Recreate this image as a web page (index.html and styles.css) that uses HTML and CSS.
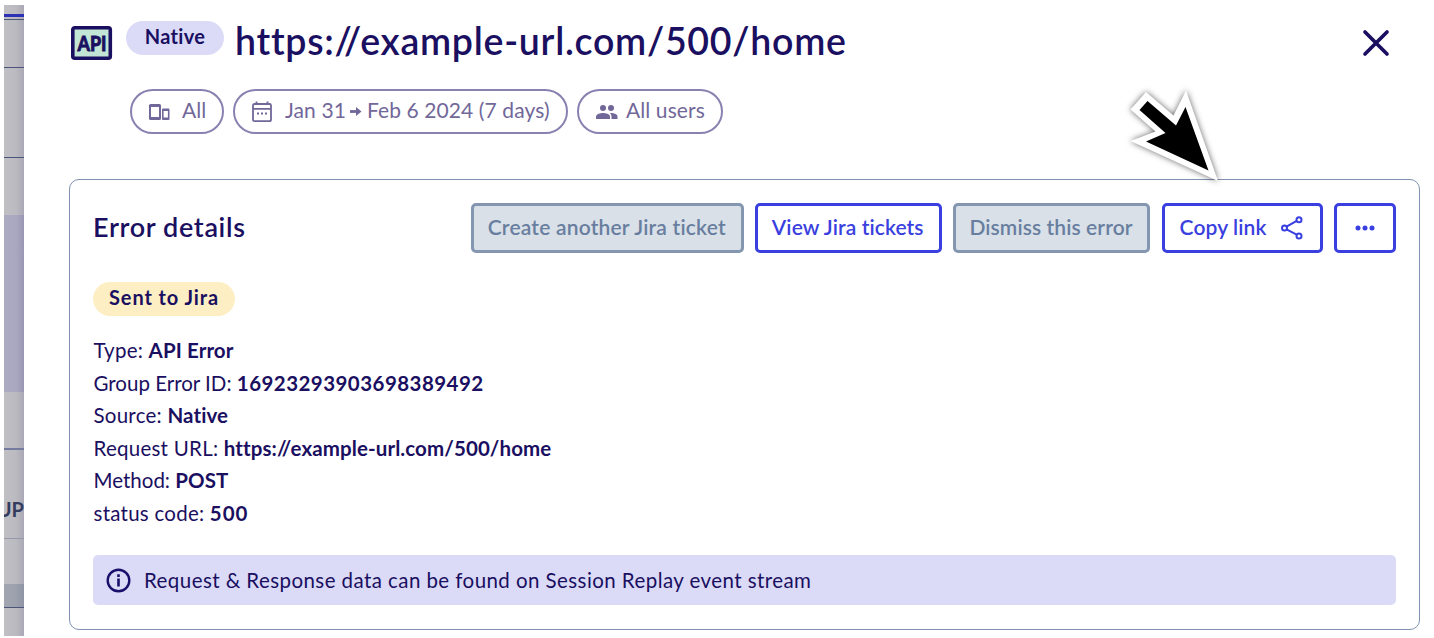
FILE: index.html
```
<!DOCTYPE html>
<html lang="en">
<head>
    <meta charset="UTF-8">
    <meta name="viewport" content="width=device-width, initial-scale=1.0">
    <title>Error details</title>
    <link rel="stylesheet" href="styles.css">
</head>
<body>
    <div class="backdrop">
        <div class="strip strip-top"></div>
        <div class="strip strip-tab"></div>
        <div class="strip strip-nav"></div>
        <div class="strip strip-filters"></div>
        <div class="strip strip-title"></div>
        <div class="strip strip-selected"></div>
        <div class="strip strip-space"></div>
        <div class="strip strip-head"><span>UP</span></div>
        <div class="strip strip-row"></div>
        <div class="strip strip-active"></div>
        <div class="strip strip-rest"></div>
    </div>

    <main class="panel">
        <header class="panel-header">
            <svg class="api-icon" width="42" height="36" viewBox="0 0 42 36">
                <rect x="1.800" y="2.800" width="37.5" height="30.500" rx="2" fill="#c3e5d5" stroke="#1a0f60" stroke-width="3.6"/>
                <text x="6.500" y="25.500" textLength="29" lengthAdjust="spacingAndGlyphs">API</text>
            </svg>
            <span class="pill pill-native">Native</span>
            <h1>https://example-url.com/500/home</h1>
            <svg class="close" width="28" height="28" viewBox="0 0 28 28">
                <path d="M3 3L25 25M25 3L3 25" fill="none" stroke="#1a0f60" stroke-width="3.7" stroke-linecap="round"/>
            </svg>
        </header>

        <div class="filters">
            <div class="filter filter-device">
                <svg width="22" height="18" viewBox="0 0 22 18" fill="#716799">
                    <path fill-rule="evenodd" d="M1.5 1H10.500Q12 1 12 2.500V15.500Q12 17 10.500 17H1.500Q0 17 0 15.500V2.500Q0 1 1.500 1ZM2 4V14H10V4Z"/>
                    <path fill-rule="evenodd" d="M14 5.500H19.500Q20.500 5.500 20.500 6.500V16Q20.500 17 19.500 17H14Q13 17 13 16V6.500Q13 5.500 14 5.500ZM14.600 8V14.600H18.900V8Z"/>
                </svg>
                <span>All</span>
            </div>
            <div class="filter filter-date">
                <svg width="20" height="22" viewBox="0 0 20 22">
                    <path d="M2.500 3H17.500Q19 3 19 4.500V18.500Q19 20.200 17.500 20.200H2.500Q1 20.200 1 18.500V4.500Q1 3 2.500 3ZM1 7.800H19M4.500 .5V3M15.500 .5V3" fill="none" stroke="#716799" stroke-width="1.800"/>
                    <path d="M5 12.500H7M9 12.500H11M13 12.500H15" stroke="#716799" stroke-width="2"/>
                </svg>
                <span>Jan 31 <svg class="arrow" width="12" height="9" viewBox="0 0 12 9"><path d="M0 4.500H7" stroke="#716799" stroke-width="2.800"/><path d="M6 0L11.500 4.500L6 9Z" fill="#716799"/></svg> Feb 6 2024 (7 days)</span>
            </div>
            <div class="filter filter-users">
                <svg width="22" height="14" viewBox="0 0 22 14" fill="#716799">
                    <circle cx="7" cy="3" r="3"/>
                    <circle cx="15" cy="3" r="3"/>
                    <path d="M0 14V11.500C0 9 4.500 8 7 8S14 9 14 11.500V14Z"/>
                    <path d="M15.500 14V11.500C15.500 10 14.800 9 13.800 8.100C17 7.800 21.500 9 21.500 11.500V14Z"/>
                </svg>
                <span>All users</span>
            </div>
        </div>

        <section class="card">
            <div class="card-header">
                <h2>Error details</h2>
                <div class="actions">
                    <button class="btn btn-create" disabled><span>Create another Jira ticket</span></button>
                    <button class="btn btn-view"><span>View Jira tickets</span></button>
                    <button class="btn btn-dismiss" disabled><span>Dismiss this error</span></button>
                    <button class="btn btn-copy">
                        <span>Copy link</span>
                        <svg width="22" height="24" viewBox="0 0 22 24" fill="none" stroke="#3a3fe0" stroke-width="2">
                            <path d="M5.500 10.700L15.700 4.800M5.500 13.300L15.700 18.700"/>
                            <circle cx="3.500" cy="12" r="2.500"/>
                            <circle cx="18" cy="3.700" r="2.500"/>
                            <circle cx="18" cy="20" r="2.500"/>
                        </svg>
                    </button>
                    <button class="btn btn-more">
                        <svg width="20" height="6" viewBox="0 0 20 6" fill="#3a3fe0">
                            <circle cx="3" cy="3" r="2.500"/>
                            <circle cx="10" cy="3" r="2.500"/>
                            <circle cx="17" cy="3" r="2.500"/>
                        </svg>
                    </button>
                </div>
            </div>

            <span class="pill pill-jira">Sent to Jira</span>

            <ul class="details">
                <li>Type: <b>API Error</b></li>
                <li class="error-id">Group Error ID: <b>16923293903698389492</b></li>
                <li>Source: <b>Native</b></li>
                <li>Request URL: <b>https://example-url.com/500/home</b></li>
                <li class="method">Method: <b>POST</b></li>
                <li>status code: <b class="code">500</b></li>
            </ul>

            <div class="info">
                <svg width="25" height="25" viewBox="0 0 25 25">
                    <circle cx="12.500" cy="12.500" r="10.800" fill="none" stroke="#1a0f6b" stroke-width="2.400"/>
                    <path d="M12.500 10.500V18.500M12.500 6.300V9" stroke="#1a0f6b" stroke-width="2.600"/>
                </svg>
                <span>Request &amp; Response data can be found on Session Replay event stream</span>
            </div>
        </section>
    </main>

    <svg class="pointer" width="110" height="114" viewBox="0 0 110 114">
        <path d="M36 22L20.500 39.500L45.500 61.500L20.500 71L108 111L76 20.500L63.500 45.500Z" fill="#fff"/>
        <path d="M37.500 31L29.500 40L55.500 63L36 71.500L98.500 100.500L75.500 37L66 55.500Z" fill="#000"/>
    </svg>
</body>
</html>
```
FILE: styles.css
```
* {
    box-sizing: border-box;
}
body {
    font-family: Lato, 'Open Sans', sans-serif;
    font-variant-ligatures: none;
    margin: 0;
    height: 638px;
    overflow: hidden;
    display: flex;
    position: relative;
    background-color: #fff;
    color: #1a0f60;
}
span, b, li {
    white-space: nowrap;
}

/* page behind the panel */
.backdrop {
    width: 20px;
    height: 631px;
    margin: 5px 0 0 4px;
    background: linear-gradient(to right, #c0bfc4, #bbbac0 60%, #aaa8b6);
    overflow: hidden;
    flex-shrink: 0;
}
.strip {
    border-bottom: 1px solid #4b5479;
}
.strip-top {
    height: 12px;
    border-bottom: 3px solid #2d31b5;
}
.strip-tab {
    height: 3px;
}
.strip-nav {
    height: 48px;
}
.strip-filters {
    height: 90px;
}
.strip-title {
    height: 57px;
    border: none;
}
.strip-selected {
    height: 177px;
    border: none;
    background: linear-gradient(to right, #adabc2, #aaa8c0 60%, #9896b3);
}
.strip-space {
    height: 58px;
    border-bottom: 2px solid #747b9f;
}
.strip-head {
    height: 89px;
    padding-top: 47px;
    border-color: #979aac;
    display: flex;
    justify-content: flex-end;
    align-items: flex-start;
    color: #343c60;
    font-size: 20px;
    line-height: 24px;
    font-weight: 700;
}
.strip-row {
    height: 45px;
    border: none;
}
.strip-active {
    height: 24px;
    background: linear-gradient(to right, #a2a6b1, #9ca1ad 60%, #8f93a5);
}
.strip-rest {
    border: none;
}

.panel {
    flex: 1;
    padding: 20px 14px 0 45px;
}
.panel-header {
    display: flex;
    align-items: flex-start;
    height: 69px;
}
.api-icon {
    margin: 5px 13px 0 2px;
}
.api-icon text {
    font-size: 21px;
    font-weight: 900;
    fill: #1a0f60;
    stroke: #1a0f60;
    stroke-width: .8px;
}
.pill {
    display: flex;
    align-items: center;
    justify-content: center;
    height: 34px;
    border-radius: 17px;
    font-size: 20px;
    font-weight: 700;
    letter-spacing: .3px;
    padding-bottom: 4px;
}
.pill-native {
    width: 98px;
    margin-top: 1px;
    background-color: #dbdbf8;
}
h1 {
    margin: -1px 0 0 11px;
    font-size: 37.5px;
    line-height: 44px;
    font-weight: 600;
    letter-spacing: .72px;
}
.close {
    margin: 9px 30.5px 0 auto;
}

.filters {
    display: flex;
    gap: 9px;
    padding-left: 61px;
    height: 90px;
    color: #716799;
}
.filter {
    display: flex;
    align-items: center;
    height: 45px;
    border: 2px solid #8a81b0;
    border-radius: 23px;
    font-size: 21px;
}
.filter span {
    padding-bottom: 5px;
}
.filter-device {
    width: 94px;
    padding-left: 17px;
    gap: 11px;
}
.filter-date {
    width: 335px;
    padding-left: 17px;
    gap: 13px;
    letter-spacing: .1px;
}
.filter-users {
    width: 146px;
    padding-left: 17px;
    gap: 8px;
    letter-spacing: .1px;
}
.arrow {
    margin: 0 -1px;
    vertical-align: 2px;
}

.card {
    height: 451px;
    border: 1.5px solid #8192b0;
    border-radius: 10px;
    padding: 23px;
}
.card-header {
    display: flex;
    justify-content: space-between;
    align-items: center;
    height: 50px;
}
h2 {
    margin: 0 0 3px;
    font-size: 27px;
    line-height: 32px;
    font-weight: 600;
    letter-spacing: .65px;
}
.actions {
    display: flex;
    gap: 11.5px;
}
.btn {
    display: flex;
    align-items: center;
    justify-content: center;
    height: 50px;
    padding: 0 1px 4px 0;
    border: 3px solid #3a3fe0;
    border-radius: 5px;
    background-color: #fff;
    color: #3a3fe0;
    font-family: inherit;
    font-size: 21px;
    font-weight: 600;
    letter-spacing: .1px;
}
.btn:disabled {
    background-color: #d9e0e8;
    border-color: #8496b0;
    color: #687e9f;
}
.btn-create {
    width: 272.5px;
    letter-spacing: .2px;
}
.btn-view {
    width: 186.5px;
}
.btn-dismiss {
    width: 197px;
}
.btn-copy {
    width: 161px;
    gap: 15px;
}
.btn-copy svg {
    margin-top: 4px;
}
.btn-more {
    width: 62px;
    padding: 0;
}

.pill-jira {
    width: 142px;
    margin-top: 29px;
    letter-spacing: .9px;
    background-color: #fdefc3;
}
.details {
    list-style: none;
    margin: 18px 0 0 .5px;
    padding: 0;
    font-size: 20.5px;
    line-height: 32.5px;
    letter-spacing: .25px;
}
.details b {
    font-weight: 700;
    letter-spacing: .1px;
}
.details .error-id, .details .method {
    letter-spacing: 0;
}
.details .error-id b {
    letter-spacing: .45px;
}
.details .code {
    letter-spacing: 1px;
}
.info {
    display: flex;
    align-items: center;
    gap: 13px;
    height: 50px;
    margin-top: 26px;
    padding-left: 13px;
    border-radius: 5px;
    background-color: #dbdbf8;
    font-size: 20.5px;
    letter-spacing: .43px;
}

.pointer {
    position: absolute;
    left: 1110px;
    top: 70px;
    filter: drop-shadow(0 0 3px rgba(0, 0, 0, .6));
}
```
